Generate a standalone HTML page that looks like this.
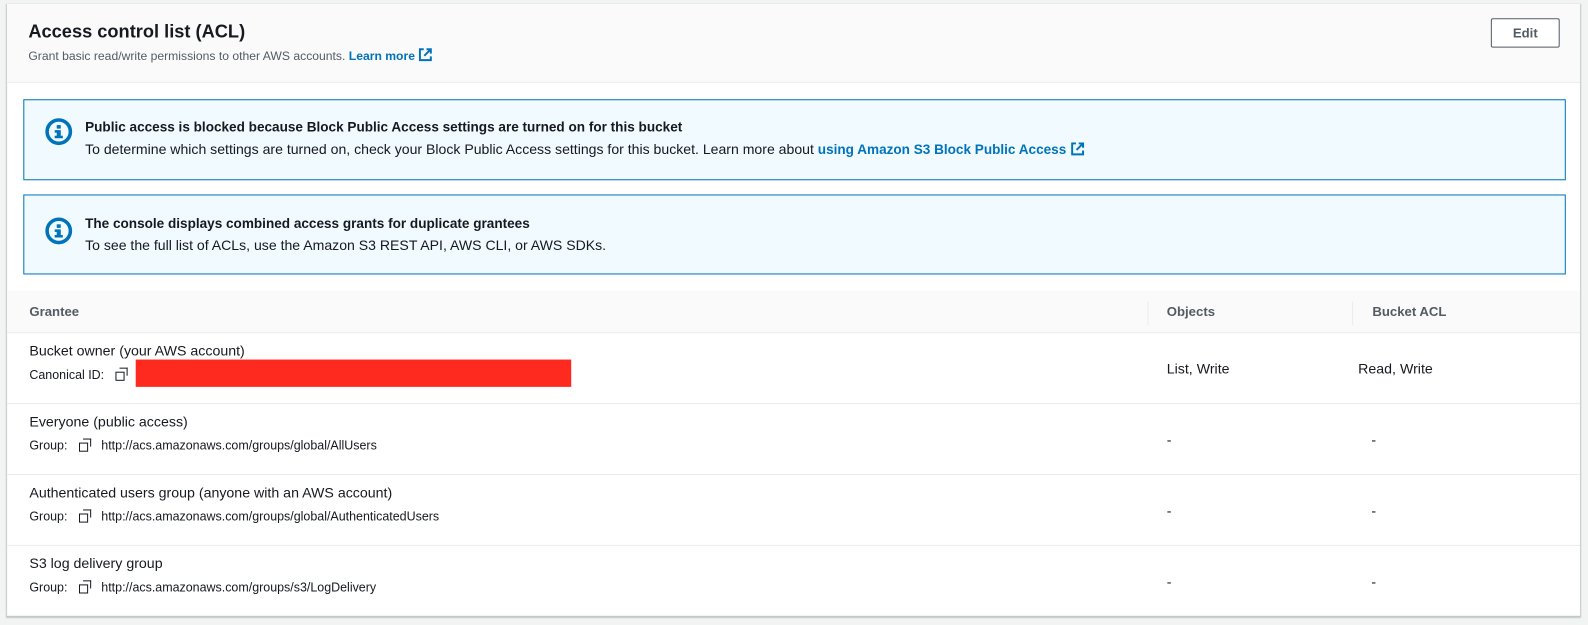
<!DOCTYPE html>
<html><head><style>
body{margin:0;width:1588px;height:625px;background:#f2f3f3;font-family:"Liberation Sans",sans-serif;color:#16191f;overflow:hidden}
#w{position:absolute;left:0;top:0;width:1568px;height:617px;transform:scale(1.0128);transform-origin:0 0}
.a{position:absolute;white-space:nowrap}
.panel{position:absolute;left:7px;top:4px;width:1553px;height:604px;background:#fff;box-shadow:0 1px 1px 1px rgba(0,28,36,.2)}
.alert{position:absolute;left:23px;width:1521px;background:#f1faff;border:1px solid #0073bb}
.ic{position:absolute}
.row{position:absolute;left:7px;width:1553px;height:70px;border-top:1px solid #eaeded}
.cp{display:inline-block;width:14px;height:13px;position:relative;vertical-align:-2px;margin:0 8px 0 8px}
.cp:before{content:"";position:absolute;left:0;top:4px;width:7px;height:7px;border:1.8px solid #16191f}
.cp:after{content:"";position:absolute;left:4px;top:0;width:7px;height:7px;border-top:1.8px solid #16191f;border-right:1.8px solid #16191f}
.s{font-size:12.3px}
.m{font-size:14px}
</style></head><body><div id="w">
<div class="panel"></div>
<div class="a" style="left:7px;top:4px;width:1553px;height:77px;background:#fafafa;border-bottom:1px solid #eaeded"></div>
<div class="a" style="left:28px;top:21px;font-size:18px;font-weight:bold">Access control list (ACL)</div>
<div class="a" style="left:28px;top:47px;font-size:12px;color:#545b64">Grant basic read/write permissions to other AWS accounts. <span style="color:#0073bb;font-weight:bold">Learn more</span> <svg width="14" height="14" viewBox="0 0 13 13" style="vertical-align:-2px"><path d="M5 1.5H1.5v10h10V8M7.5 1.5h4v4M11.5 1.5l-6 6" fill="none" stroke="#0073bb" stroke-width="1.8"/></svg></div>
<div class="a" style="left:1472px;top:18px;width:66px;height:27px;border:1px solid #545b64;border-radius:2px;background:#fff;font-size:13px;font-weight:bold;color:#545b64;text-align:center;line-height:27px">Edit</div>

<div class="alert" style="top:98px;height:78px"></div>
<svg class="ic" style="left:44px;top:116px" width="28" height="28" viewBox="0 0 28 28"><circle cx="14" cy="14" r="11.5" fill="none" stroke="#0073bb" stroke-width="3.5"/><rect x="12" y="7.5" width="4" height="3.5" fill="#0073bb"/><rect x="12" y="12.5" width="4" height="7.5" fill="#0073bb"/><rect x="10" y="12.5" width="3" height="2.5" fill="#0073bb"/><rect x="10" y="18" width="8" height="2.5" fill="#0073bb"/></svg>
<div class="a" style="left:84px;top:118px;font-size:13.4px;font-weight:bold">Public access is blocked because Block Public Access settings are turned on for this bucket</div>
<div class="a" style="left:84px;top:139px;font-size:13.9px">To determine which settings are turned on, check your Block Public Access settings for this bucket. Learn more about <span style="color:#0073bb;font-weight:bold;font-size:13.4px">using Amazon S3 Block Public Access</span> <svg width="14" height="14" viewBox="0 0 13 13" style="vertical-align:-2px"><path d="M5 1.5H1.5v10h10V8M7.5 1.5h4v4M11.5 1.5l-6 6" fill="none" stroke="#0073bb" stroke-width="1.8"/></svg></div>

<div class="alert" style="top:192px;height:77px"></div>
<svg class="ic" style="left:44px;top:214px" width="28" height="28" viewBox="0 0 28 28"><circle cx="14" cy="14" r="11.5" fill="none" stroke="#0073bb" stroke-width="3.5"/><rect x="12" y="7.5" width="4" height="3.5" fill="#0073bb"/><rect x="12" y="12.5" width="4" height="7.5" fill="#0073bb"/><rect x="10" y="12.5" width="3" height="2.5" fill="#0073bb"/><rect x="10" y="18" width="8" height="2.5" fill="#0073bb"/></svg>
<div class="a" style="left:84px;top:213px;font-size:13.4px;font-weight:bold">The console displays combined access grants for duplicate grantees</div>
<div class="a" style="left:84px;top:234px;font-size:13.9px">To see the full list of ACLs, use the Amazon S3 REST API, AWS CLI, or AWS SDKs.</div>

<div class="a" style="left:7px;top:287px;width:1553px;height:41px;background:#fafafa"></div>
<div class="a" style="left:29px;top:300px;font-size:13px;font-weight:bold;color:#545b64">Grantee</div>
<div class="a" style="left:1133px;top:298px;width:1px;height:23px;background:#eaeded"></div>
<div class="a" style="left:1152px;top:300px;font-size:13px;font-weight:bold;color:#545b64">Objects</div>
<div class="a" style="left:1335px;top:298px;width:1px;height:23px;background:#eaeded"></div>
<div class="a" style="left:1355px;top:300px;font-size:13px;font-weight:bold;color:#545b64">Bucket ACL</div>

<div class="row" style="top:328px"></div>
<div class="a m" style="left:29px;top:338px">Bucket owner (your AWS account)</div>
<div class="a s" style="left:29px;top:363px">Canonical ID: <span class="cp"></span></div>
<div class="a" style="left:134px;top:355px;width:430px;height:27px;background:#ff2a1f"></div>
<div class="a m" style="left:1152px;top:356px">List, Write</div>
<div class="a m" style="left:1341px;top:356px">Read, Write</div>

<div class="row" style="top:398px"></div>
<div class="a m" style="left:29px;top:408px">Everyone (public access)</div>
<div class="a s" style="left:29px;top:433px">Group: <span class="cp"></span>http://acs.amazonaws.com/groups/global/AllUsers</div>
<div class="a m" style="left:1152px;top:426px">-</div>
<div class="a m" style="left:1354px;top:426px">-</div>

<div class="row" style="top:468px"></div>
<div class="a m" style="left:29px;top:478px">Authenticated users group (anyone with an AWS account)</div>
<div class="a s" style="left:29px;top:503px">Group: <span class="cp"></span>http://acs.amazonaws.com/groups/global/AuthenticatedUsers</div>
<div class="a m" style="left:1152px;top:496px">-</div>
<div class="a m" style="left:1354px;top:496px">-</div>

<div class="row" style="top:538px"></div>
<div class="a m" style="left:29px;top:548px">S3 log delivery group</div>
<div class="a s" style="left:29px;top:573px">Group: <span class="cp"></span>http://acs.amazonaws.com/groups/s3/LogDelivery</div>
<div class="a m" style="left:1152px;top:566px">-</div>
<div class="a m" style="left:1354px;top:566px">-</div>
</div></body></html>
